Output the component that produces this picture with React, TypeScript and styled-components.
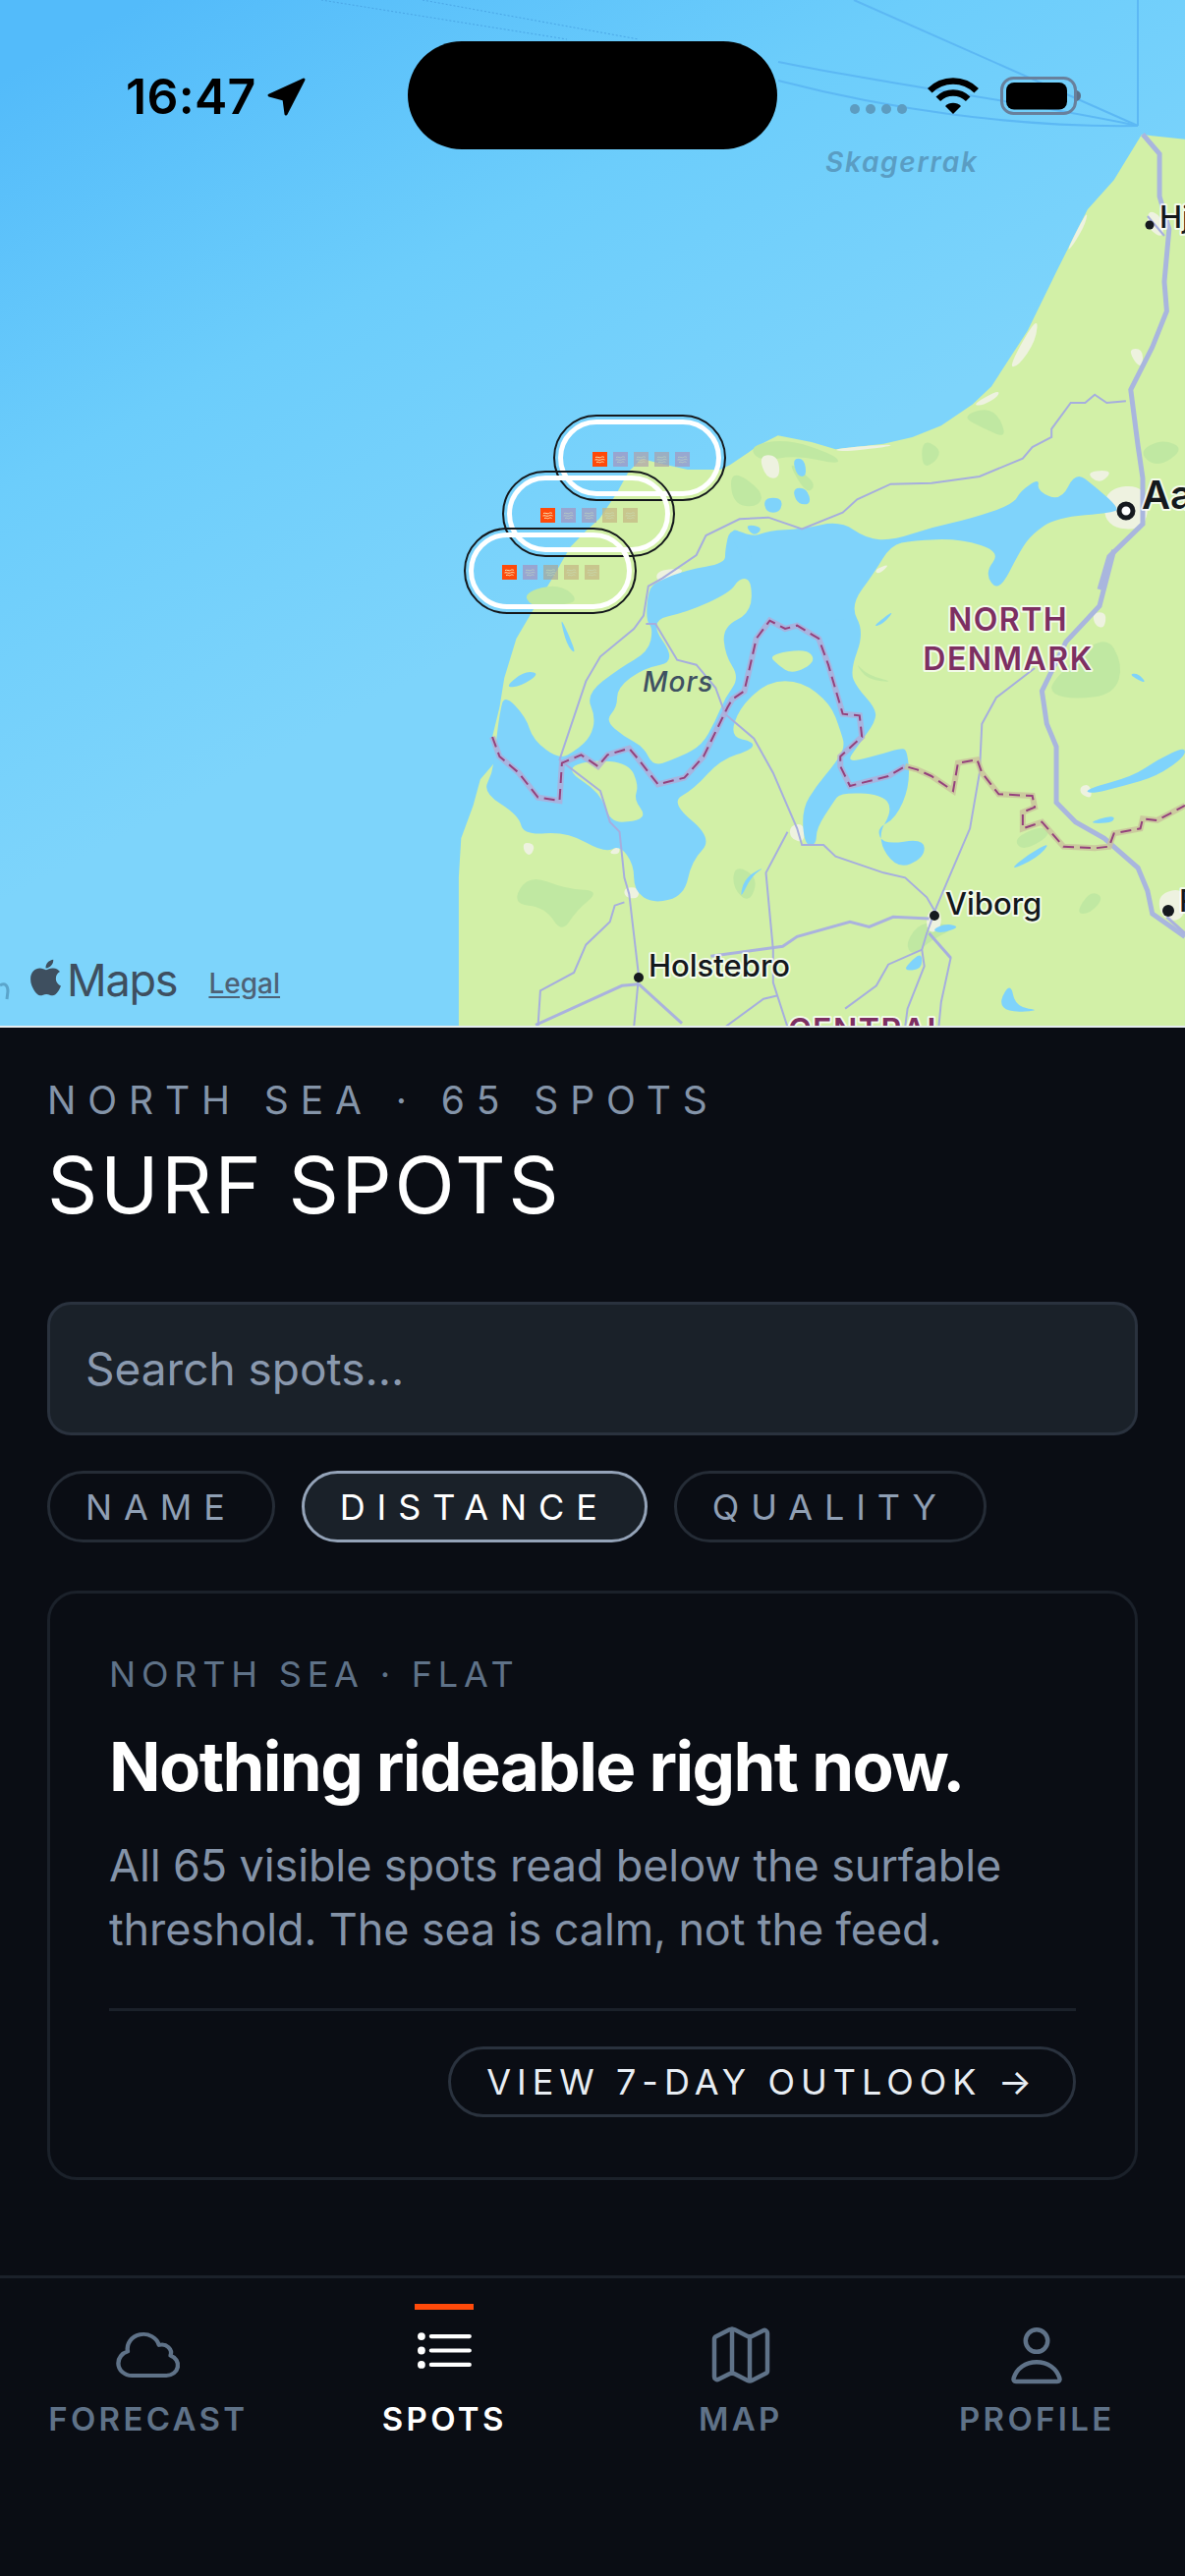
import React from "react";
import styled, { createGlobalStyle } from "styled-components";
import { FaApple } from "react-icons/fa";
import { Map as MapIcon } from "lucide-react";

const GlobalStyle = createGlobalStyle`
  html, body {
    margin: 0;
    padding: 0;
    background: #0a0d14;
  }
  * {
    box-sizing: border-box;
  }
`;

const Page = styled.div`
  width: 1206px;
  height: 2622px;
  display: flex;
  flex-direction: column;
  overflow: hidden;
  background: #0a0d14;
  font-family: Inter, "Liberation Sans", sans-serif;
`;

const MapArea = styled.div`
  position: relative;
  flex: none;
  height: 1046px;
  border-bottom: 2px solid #e6edf0;
  overflow: hidden;
`;

const MapCanvas = styled.svg`
  display: block;
  width: 1206px;
  height: 1044px;
`;

const StatusBar = styled.div`
  position: absolute;
  top: 0;
  left: 0;
  right: 0;
  height: 160px;
`;

const Clock = styled.span`
  position: absolute;
  left: 128px;
  top: 68px;
  font-size: 50px;
  line-height: 60px;
  font-weight: 600;
  letter-spacing: 0.3px;
  color: #000;
`;

const Island = styled.div`
  position: absolute;
  left: 415px;
  top: 42px;
  width: 376px;
  height: 110px;
  border-radius: 55px;
  background: #000;
`;

const StatusGlyphs = styled.svg`
  position: absolute;
  top: 0;
  left: 0;
  width: 1206px;
  height: 160px;
`;

const Attribution = styled.div`
  position: absolute;
  left: 32px;
  top: 974px;
  display: flex;
  align-items: center;
  color: #3e4f5f;
`;

const AppleMark = styled(FaApple)`
  width: 33px;
  height: 42px;
  margin-left: -2px;
  margin-right: 5px;
  margin-top: -6px;
`;

const MapsWord = styled.span`
  font-size: 45px;
  line-height: 48px;
  font-weight: 400;
  letter-spacing: -1.2px;
`;

const LegalLink = styled.span`
  margin-left: 32px;
  margin-top: 6px;
  font-size: 28px;
  line-height: 34px;
  font-weight: 500;
  color: #4e6276;
  text-decoration: underline;
  text-underline-offset: 3px;
`;

const Panel = styled.main`
  flex: 1;
  padding: 50px 48px 0;
`;

const Eyebrow = styled.div`
  font-size: 39px;
  line-height: 48px;
  font-weight: 400;
  letter-spacing: 11.9px;
  color: #8494a9;
`;

const Title = styled.h1`
  margin: 14px 0 0;
  font-size: 80px;
  line-height: 96px;
  font-weight: 400;
  letter-spacing: 2.7px;
  color: #fff;
`;

const SearchBox = styled.div`
  margin-top: 71px;
  height: 136px;
  padding: 0 36px;
  display: flex;
  align-items: center;
  background: #1a2129;
  border: 3px solid #2a323e;
  border-radius: 24px;
  font-size: 46px;
  color: #8a99ae;
`;

const Chips = styled.div`
  margin-top: 36px;
  display: flex;
  gap: 27px;
`;

const Chip = styled.div<{ $active?: boolean }>`
  height: 73px;
  padding: 0 36px;
  display: flex;
  align-items: center;
  border-radius: 37px;
  border: 3px solid ${(p) => (p.$active ? "#94a3b8" : "#252c36")};
  background: ${(p) => (p.$active ? "#1a2129" : "transparent")};
  color: ${(p) => (p.$active ? "#fff" : "#8f9fb4")};
  font-size: 36px;
  letter-spacing: 11.9px;
`;

const Card = styled.section`
  margin-top: 49px;
  height: 600px;
  padding: 58px 60px 0;
  border: 3px solid #1b212a;
  border-radius: 30px;
`;

const CardLabel = styled.div`
  font-size: 36px;
  line-height: 48px;
  letter-spacing: 5.8px;
  color: #5f7288;
`;

const CardHeading = styled.h2`
  margin: 28px 0 0;
  font-size: 69px;
  line-height: 84px;
  font-weight: 700;
  letter-spacing: -1.63px;
  color: #fff;
`;

const CardBody = styled.p`
  margin: 26px 0 0;
  font-size: 45px;
  line-height: 65px;
  letter-spacing: -0.12px;
  color: #8493a8;
`;

const CardDivider = styled.hr`
  margin: 48px 0 0;
  height: 3px;
  border: 0;
  background: #1b212a;
`;

const CardActions = styled.div`
  margin-top: 36px;
  display: flex;
  justify-content: flex-end;
`;

const OutlineButton = styled.div`
  height: 72px;
  padding: 0 36px;
  display: flex;
  align-items: center;
  border: 3px solid #2a323e;
  border-radius: 36px;
  font-size: 36px;
  letter-spacing: 6px;
  color: #e8edf3;
  white-space: nowrap;
`;

const TabBar = styled.nav`
  flex: none;
  height: 306px;
  border-top: 3px solid #1b212a;
  display: grid;
  grid-template-columns: repeat(4, 1fr);
`;

const Tab = styled.div<{ $active?: boolean }>`
  position: relative;
  padding-top: 42px;
  display: flex;
  flex-direction: column;
  align-items: center;
  color: ${(p) => (p.$active ? "#fff" : "#5f7288")};
`;

const TabMarker = styled.span`
  position: absolute;
  top: 26px;
  left: 50%;
  width: 60px;
  height: 6px;
  margin-left: -30px;
  background: #ff4a0a;
`;

const TabIconBox = styled.span`
  width: 72px;
  height: 72px;
  display: flex;
  align-items: center;
  justify-content: center;
  svg {
    display: block;
    width: 72px;
    height: 72px;
  }
`;

const TabLabel = styled.span`
  margin-top: 9px;
  font-size: 33px;
  line-height: 40px;
  font-weight: 600;
  letter-spacing: 3.3px;
`;

// the map is traced in crop coordinates: x = 440 + X * .4885, y = 560 + Y / 3
const TRACE = "translate(440 560) scale(0.4885 0.33333)";

const LAND =
  "1568,-1255 1500,-1265 1478,-1270 1420,-1130 1365,-1040 1300,-850 1270,-760 1240,-670 1200,-580 1165,-500 1125,-445 1060,-380 1000,-345 940,-325 840,-308 790,-330 720,-350 680,-320 620,-260 600,-246 532,-246 477,-264 436,-279 409,-240 383,-171 348,-96 321,-60 287,-9 252,81 211,180 175,270 150,390 140,480 125,570 135,640 100,700 85,780 60,880 55,1000 55,1500 1568,1500";

const FJORD =
  "770,-65 850,-90 905,-35 960,-30 1040,-70 1120,-95 1210,-140 1225,-180 1265,-220 1260,-180 1310,-150 1340,-240 1380,-195 1430,-130 1420,-115 1300,-100 1250,-50 1225,0 1180,130 1150,70 1185,5 1100,-35 1000,-30 955,-15 920,70 870,170 900,250 870,370 885,420 922,480 925,520 885,600 862,650 930,625 975,605 990,610 995,720 965,820 925,850 940,900 1025,880 1025,940 968,975 925,880 960,790 935,745 850,740 835,770 800,850 800,900 775,900 770,790 800,720 840,650 860,600 850,550 830,470 770,400 700,400 640,480 620,570 670,585 665,610 600,640 545,730 495,770 585,880 540,950 525,1055 460,1080 420,1040 420,960 390,900 360,925 280,860 190,870 180,810 105,740 125,680 130,620 140,500 150,440 195,510 210,580 265,640 300,610 330,570 340,510 320,440 390,360 450,310 460,240 445,215 450,120 470,95 530,60 610,40 610,0 620,-70 670,-40 700,-60";

const ISLANDS = [
  "450,215 530,190 620,130 640,85 665,90 665,190 605,235 610,320 640,390 610,450 590,520 560,600 500,640 460,660 440,600 400,570 360,520 385,480 385,420 440,360 510,340",
  "275,670 330,640 410,650 430,720 420,760 445,810 420,830 370,830 350,740",
  "700,320 780,300 800,340 750,380 720,350",
];

const LAKES = [
  "265,200 285,260 300,320 280,290",
  "150,420 190,370 225,375 185,415",
  "1360,730 1460,690 1510,640 1568,600 1568,630 1510,690 1440,720 1370,745",
  "1200,980 1240,930 1290,890 1260,940",
  "915,235 965,180 940,225",
  "815,222 860,205 860,210 820,226",
  "640,1070 650,1000 695,965 665,995",
  "1370,830 1420,808 1420,830 1385,835",
  "980,1285 1000,1250 1020,1230 1020,1280",
  "1450,380 1470,375 1490,410",
  "1180,1380 1205,1320 1215,1395 1270,1405 1200,1412",
  "1040,1160 1070,1140 1100,1150 1060,1170",
  "620,-70 650,-50 670,40 640,20",
  "690,-160 730,-160 725,-115 695,-115",
  "750,-190 780,-190 790,-140 760,-140",
  "750,-280 775,-280 780,-225 760,-225",
  "650,-80 690,-70 670,-40",
];

const FOREST = [
  "165,1080 200,990 280,1035 350,1040 300,1100 270,1170 235,1090",
  "1290,440 1290,400 1400,250 1440,350 1420,440 1340,455",
  "880,340 905,380 965,405 905,395",
  "1100,-410 1170,-440 1200,-340 1150,-370",
  "1020,-340 1060,-310 1050,-270 1020,-250",
  "620,-250 690,-180 680,-130 625,-140",
  "1470,-300 1520,-340 1568,-310 1510,-250",
  "190,130 265,100 310,160 240,170 205,170",
  "985,1200 1020,1130 1095,1150 1040,1190 1000,1240",
  "1210,880 1270,840 1290,870 1230,920",
  "630,960 680,1000 660,1080 625,1030",
  "1340,1110 1370,1040 1400,1060 1370,1110",
  "660,-320 740,-340 840,-290 850,-260 760,-290 680,-270",
  "740,-270 770,-240 800,-200 780,-170",
];

const SAND = [
  "1365,-1040 1320,-910 1335,-930 1362,-1000",
  "1262,-720 1200,-560 1220,-560 1258,-640",
  "1180,-490 1125,-445 1145,-440 1180,-470",
  "835,-310 960,-325 950,-315 850,-300",
  "1490,-1040 1520,-1020 1525,-950 1490,-980",
  "1450,-615 1480,-615 1480,-560 1465,-570",
  "1400,-190 1490,-200 1490,-60 1400,-70",
  "1360,-240 1420,-245 1390,-200",
  "680,-290 720,-290 725,-220 695,-220",
  "470,60 530,55 500,90 465,95",
  "920,60 955,40 930,75",
  "620,380 640,385 630,430 615,425",
  "1350,720 1370,715 1375,760 1350,745",
  "190,890 215,900 205,935 190,920",
  "400,1030 430,1030 430,1065 400,1060",
  "365,925 390,900 390,930",
  "745,840 775,835 775,895 745,880",
  "1030,1100 1060,1095 1060,1160 1030,1170",
  "1375,190 1405,190 1400,240 1380,230",
  "1510,1050 1568,1030 1568,1130 1520,1130",
];

const ROADS_THIN = [
  "1445,-455 1405,-450 1380,-475 1360,-450 1330,-450 1290,-370 1290,-345 1250,-315 1230,-280 1140,-225 1040,-205 955,-202 885,-155 855,-115 770,-65 700,-100 640,-95 570,-45 550,15 480,85 450,110 440,200 420,240 350,325 320,400 265,640 350,735 370,830 390,860 400,1000 410,1050 430,1300 420,1456",
  "445,225 465,225 510,335 550,350 590,420 610,500 670,575 710,680 760,850 770,900 815,900 840,935 940,985 985,1000 1030,1060 1050,1110",
  "1255,360 1175,450 1145,530 1140,680 1120,850 1050,1090 1030,1170 1020,1220 1025,1270 990,1400 985,1456",
  "740,860 695,985 710,1220 710,1320 740,1456",
  "400,1075 380,1085 370,1135 320,1205 295,1290 225,1345 220,1456",
  "610,1456 690,1370 720,1360",
  "1035,1170 1080,1245 1060,1380 1055,1456",
  "1020,1220 950,1265 925,1330 860,1400",
  "1490,-1020 1525,-960",
];

const ROADS_MID = [
  "215,1450 395,1330 430,1325",
  "580,1240 730,1210 760,1180 870,1135 910,1150 960,1120 1035,1125",
  "430,1325 520,1445",
  "1035,1170 1080,1245",
  "1530,1120 1568,1170",
];

const MOTORWAYS = [
  "1480,-1270 1515,-1210 1515,-1080 1535,-980 1525,-820 1530,-730 1500,-620 1455,-490 1470,-320 1480,-220 1480,-80 1410,20 1390,120",
  "1420,0 1390,170 1320,280 1270,430 1280,530 1300,600 1300,770 1340,830 1400,880 1470,970 1490,1040 1500,1110 1568,1180",
];

const BORDER_WATER =
  "125,570 140,630 180,680 220,755 265,765 270,650 310,625 345,660 365,625 410,605 430,640 470,715 525,695 565,630 615,480 625,455 650,430 675,270 703,215 735,240 760,230 805,270 825,350 855,500 890,505 895,570 850,630 850,660 870,720 950,690 985,660";

const BORDER_LAND =
  "985,660 1010,670 1040,690 1085,735 1095,650 1135,640 1145,680 1180,745 1250,750 1255,785 1230,800 1230,850 1270,830 1315,905 1380,910 1410,905 1420,865 1475,850 1480,820 1510,825 1568,780";

const SEA_LANES = [
  "M1158 128L869 0",
  "M1158 128C1050 105 900 85 792 63",
  "M1158 128C1030 130 900 110 792 82",
  "M1158 128L1158 0",
];

// rounds a traced outline, the corners go through the midpoints
const smooth = (points: string) => {
  const pts = points.split(" ").map((p) => p.split(",").map(Number));
  const mid = (a: number[], b: number[]) => `${(a[0] + b[0]) / 2} ${(a[1] + b[1]) / 2}`;
  let d = `M${mid(pts[pts.length - 1], pts[0])}`;
  pts.forEach((p, i) => {
    d += `Q${p[0]} ${p[1]} ${mid(p, pts[(i + 1) % pts.length])}`;
  });
  return d + "Z";
};

type SpotMarkerProps = { x: number; y: number; firstX: number; firstY: number; tint: string[] };

const Waves = ({ color }: { color: string }) => (
  <g fill="none" stroke={color} strokeWidth={1}>
    <path d="M3 5.5c2-1 4 1 5.5 0s2.5-.5 3.5 0" />
    <path d="M2.5 8c2-1 4 1 6 0s2.5-.5 4 0" />
    <path d="M4 10.5c2-1 3 1 4.5 0s2-.5 3 0" />
  </g>
);

const SpotMarker = ({ x, y, firstX, firstY, tint }: SpotMarkerProps) => (
  <g>
    <rect x={x + 1} y={y + 1} width={174} height={86} rx={43} fill="none" stroke="#14181c" strokeWidth={2} />
    <rect x={x + 7.5} y={y + 7.5} width={161} height={73} rx={36.5} fill="none" stroke="#fff" strokeWidth={5} />
    <rect x={firstX} y={firstY} width={15} height={15} fill="#ff4a0a" />
    <g transform={`translate(${firstX} ${firstY})`}>
      <Waves color="#f6e8b8" />
    </g>
    {tint.map((fill, i) => (
      <g key={i} transform={`translate(${firstX + 21 * (i + 1)} ${firstY})`}>
        <rect width={15} height={15} fill={fill} />
        <Waves color="rgba(200,225,190,0.55)" />
      </g>
    ))}
  </g>
);

const LABEL_HALO = {
  paintOrder: "stroke",
  stroke: "rgba(255,255,255,0.75)",
  strokeWidth: 4,
  strokeLinejoin: "round",
} as React.CSSProperties;

const MapLayer = () => (
  <MapCanvas viewBox="0 0 1206 1044">
    <defs>
      <linearGradient id="sea" gradientUnits="userSpaceOnUse" x1="150" y1="0" x2="500" y2="650">
        <stop offset="0" stopColor="#53bbfa" />
        <stop offset="0.5" stopColor="#6ccdfb" />
        <stop offset="1" stopColor="#7dd4fb" />
      </linearGradient>
    </defs>
    <rect width="1206" height="1044" fill="url(#sea)" />
    <path d="M327 0L577 40M430 0L650 40" stroke="#4aa6e6" strokeWidth={1} strokeDasharray="2 2" fill="none" />
    {SEA_LANES.map((d) => (
      <path key={d} d={d} stroke="#5cb8f4" strokeWidth={2} fill="none" />
    ))}
    <g transform={TRACE}>
      <polygon points={LAND} fill="#d2f0a7" />
      {FOREST.map((p) => (
        <path key={p} d={smooth(p)} fill="#c0e8a2" />
      ))}
      {SAND.map((p) => (
        <path key={p} d={smooth(p)} fill="#eef2e0" />
      ))}
      <path d={smooth(FJORD)} fill="#7fd3fb" />
      {ISLANDS.map((p) => (
        <path key={p} d={smooth(p)} fill="#d2f0a7" />
      ))}
      {LAKES.map((p) => (
        <path key={p} d={smooth(p)} fill="#7fd3fb" />
      ))}
      {MOTORWAYS.map((p) => (
        <polyline key={p} points={p} fill="none" stroke="#a9b6de" strokeWidth={5} vectorEffect="non-scaling-stroke" />
      ))}
      {ROADS_MID.map((p) => (
        <polyline key={p} points={p} fill="none" stroke="#aab2de" strokeWidth={3} vectorEffect="non-scaling-stroke" />
      ))}
      {ROADS_THIN.map((p) => (
        <polyline key={p} points={p} fill="none" stroke="#a6aede" strokeWidth={2} vectorEffect="non-scaling-stroke" />
      ))}
      <polyline points={BORDER_WATER} fill="none" stroke="#b4a9d6" strokeOpacity={0.75} strokeWidth={6} vectorEffect="non-scaling-stroke" />
      <polyline points={BORDER_LAND} fill="none" stroke="#c9c29c" strokeOpacity={0.8} strokeWidth={6} vectorEffect="non-scaling-stroke" />
      <polyline
        points={`${BORDER_WATER} ${BORDER_LAND}`}
        fill="none"
        stroke="#94417c"
        strokeWidth={2}
        strokeDasharray="11 6"
        vectorEffect="non-scaling-stroke"
      />
    </g>

    <SpotMarker x={563} y={422} firstX={603} firstY={460} tint={["rgba(165,145,190,.7)", "rgba(175,160,170,.7)", "rgba(170,160,170,.7)", "rgba(165,150,190,.7)"]} />
    <SpotMarker x={511} y={479} firstX={550} firstY={517} tint={["rgba(165,145,190,.7)", "rgba(165,150,185,.7)", "rgba(195,180,130,.7)", "rgba(195,180,130,.7)"]} />
    <SpotMarker x={472} y={537} firstX={511} firstY={575} tint={["rgba(165,145,190,.7)", "rgba(170,165,150,.7)", "rgba(195,180,130,.7)", "rgba(195,180,130,.7)"]} />

    <circle cx="1170" cy="229" r="4.5" fill="#15191e" />
    <circle cx="1146" cy="520" r="7" fill="#fff" stroke="#15191e" strokeWidth={5} />
    <circle cx="951" cy="932" r="5" fill="#15191e" />
    <circle cx="650" cy="995" r="5" fill="#15191e" />
    <circle cx="1189" cy="927" r="6" fill="#15191e" />

    <g fontFamily="Inter, 'Liberation Sans', sans-serif">
      <text x="840" y="175" fontSize="28" fontStyle="italic" fontWeight={600} letterSpacing="1.7" fill="#5a9dc3">
        Skagerrak
      </text>
      <text x="654" y="704" fontSize="28" fontStyle="italic" fontWeight={500} letterSpacing="1" fill="#3f5162">
        Mors
      </text>
      <text x="1026" y="642" fontSize="32" fontWeight={600} letterSpacing="1.5" textAnchor="middle" fill="#7d2f62" style={LABEL_HALO}>
        NORTH
      </text>
      <text x="1026" y="682" fontSize="32" fontWeight={600} letterSpacing="1.5" textAnchor="middle" fill="#7d2f62" style={LABEL_HALO}>
        DENMARK
      </text>
      <text x="802" y="1060" fontSize="32" fontWeight={600} letterSpacing="1.5" fill="#7d2f62" style={LABEL_HALO}>
        CENTRAL
      </text>
      <text x="1180" y="232" fontSize="31" fontWeight={500} fill="#14181c" style={LABEL_HALO}>
        Hjørring
      </text>
      <text x="1162" y="518" fontSize="40" fontWeight={600} fill="#14181c" style={LABEL_HALO}>
        Aalborg
      </text>
      <text x="962" y="931" fontSize="31" fontWeight={500} fill="#14181c" style={LABEL_HALO}>
        Viborg
      </text>
      <text x="660" y="994" fontSize="31" fontWeight={500} fill="#14181c" style={LABEL_HALO}>
        Holstebro
      </text>
      <text x="1200" y="928" fontSize="31" fontWeight={500} fill="#14181c" style={LABEL_HALO}>
        Randers
      </text>
    </g>
    <path d="M0 1003c5-3 8 0 8 6l-1 8" fill="none" stroke="#5ba5cb" strokeWidth={3} />
  </MapCanvas>
);

const StatusLayer = () => (
  <StatusBar>
    <Clock>16:47</Clock>
    <Island />
    <StatusGlyphs viewBox="0 0 1206 160">
      <path d="M309 81L274 97L289 101L291 116Z" fill="#000" stroke="#000" strokeWidth={3} strokeLinejoin="round" />
      {[870, 886, 902, 918].map((cx) => (
        <circle key={cx} cx={cx} cy={111} r={5} fill="#5d9cc0" />
      ))}
      <path d="M946.3 92.3A33.5 33.5 0 0 1 993.7 92.3" fill="none" stroke="#000" strokeWidth={6.5} />
      <path d="M954.8 100.8A21.5 21.5 0 0 1 985.2 100.8" fill="none" stroke="#000" strokeWidth={6.5} />
      <path d="M970 116L962 108A11.3 11.3 0 0 1 978 108Z" fill="#000" />
      <rect x="1019.5" y="79.5" width="75" height="36" rx="12" fill="none" stroke="#68809c" strokeWidth={3} />
      <rect x="1024" y="84" width="62" height="27.5" rx="8" fill="#000" />
      <path d="M1096 92c3 1 4 3 4 5.500s-1 4.500-4 5.500Z" fill="#5c7088" />
    </StatusGlyphs>
  </StatusBar>
);

const CloudIcon = () => (
  <svg viewBox="0 0 24 24" fill="none" stroke="currentColor" strokeWidth={1.4} strokeLinejoin="round">
    <path
      transform="translate(1.8 5) scale(1.036 .933) translate(-2.25 -4.5)"
      d="M2.25 15a4.5 4.5 0 0 0 4.5 4.5H18a3.75 3.75 0 0 0 1.332-7.257 3 3 0 0 0-3.758-3.848 5.25 5.25 0 0 0-10.233 2.33A4.502 4.502 0 0 0 2.25 15Z"
    />
  </svg>
);

const ListIcon = () => (
  <svg viewBox="0 0 24 24" fill="none" stroke="currentColor" strokeWidth={1.4} strokeLinecap="round">
    <path d="M7.6 5.7h13M7.6 10.500h13M7.600 15.300h13" />
    <circle cx="4.300" cy="5.700" r="1.300" fill="currentColor" stroke="none" />
    <circle cx="4.300" cy="10.500" r="1.300" fill="currentColor" stroke="none" />
    <circle cx="4.300" cy="15.300" r="1.300" fill="currentColor" stroke="none" />
  </svg>
);

const UserIcon = () => (
  <svg viewBox="0 0 24 24" fill="none" stroke="currentColor" strokeWidth={1.5} strokeLinejoin="round">
    <circle cx="12" cy="7.200" r="3.750" />
    <path d="M5 21h14c.7 0 1-.5.8-1.100C18.800 16.600 15.800 14.400 12 14.400s-6.800 2.200-7.800 5.500c-.2.6.1 1.100.8 1.100Z" />
  </svg>
);

const App = () => (
  <Page>
    <GlobalStyle />
    <MapArea>
      <MapLayer />
      <StatusLayer />
      <Attribution>
        <AppleMark />
        <MapsWord>Maps</MapsWord>
        <LegalLink>Legal</LegalLink>
      </Attribution>
    </MapArea>
    <Panel>
      <Eyebrow>NORTH SEA · 65 SPOTS</Eyebrow>
      <Title>SURF SPOTS</Title>
      <SearchBox>Search spots...</SearchBox>
      <Chips>
        <Chip>NAME</Chip>
        <Chip $active>DISTANCE</Chip>
        <Chip>QUALITY</Chip>
      </Chips>
      <Card>
        <CardLabel>NORTH SEA · FLAT</CardLabel>
        <CardHeading>Nothing rideable right now.</CardHeading>
        <CardBody>
          All 65 visible spots read below the surfable threshold. The sea is calm, not the feed.
        </CardBody>
        <CardDivider />
        <CardActions>
          <OutlineButton>VIEW 7-DAY OUTLOOK →</OutlineButton>
        </CardActions>
      </Card>
    </Panel>
    <TabBar>
      <Tab>
        <TabIconBox>
          <CloudIcon />
        </TabIconBox>
        <TabLabel>FORECAST</TabLabel>
      </Tab>
      <Tab $active>
        <TabMarker />
        <TabIconBox>
          <ListIcon />
        </TabIconBox>
        <TabLabel>SPOTS</TabLabel>
      </Tab>
      <Tab>
        <TabIconBox>
          <MapIcon strokeWidth={1.5} />
        </TabIconBox>
        <TabLabel>MAP</TabLabel>
      </Tab>
      <Tab>
        <TabIconBox>
          <UserIcon />
        </TabIconBox>
        <TabLabel>PROFILE</TabLabel>
      </Tab>
    </TabBar>
  </Page>
);

export default App;
